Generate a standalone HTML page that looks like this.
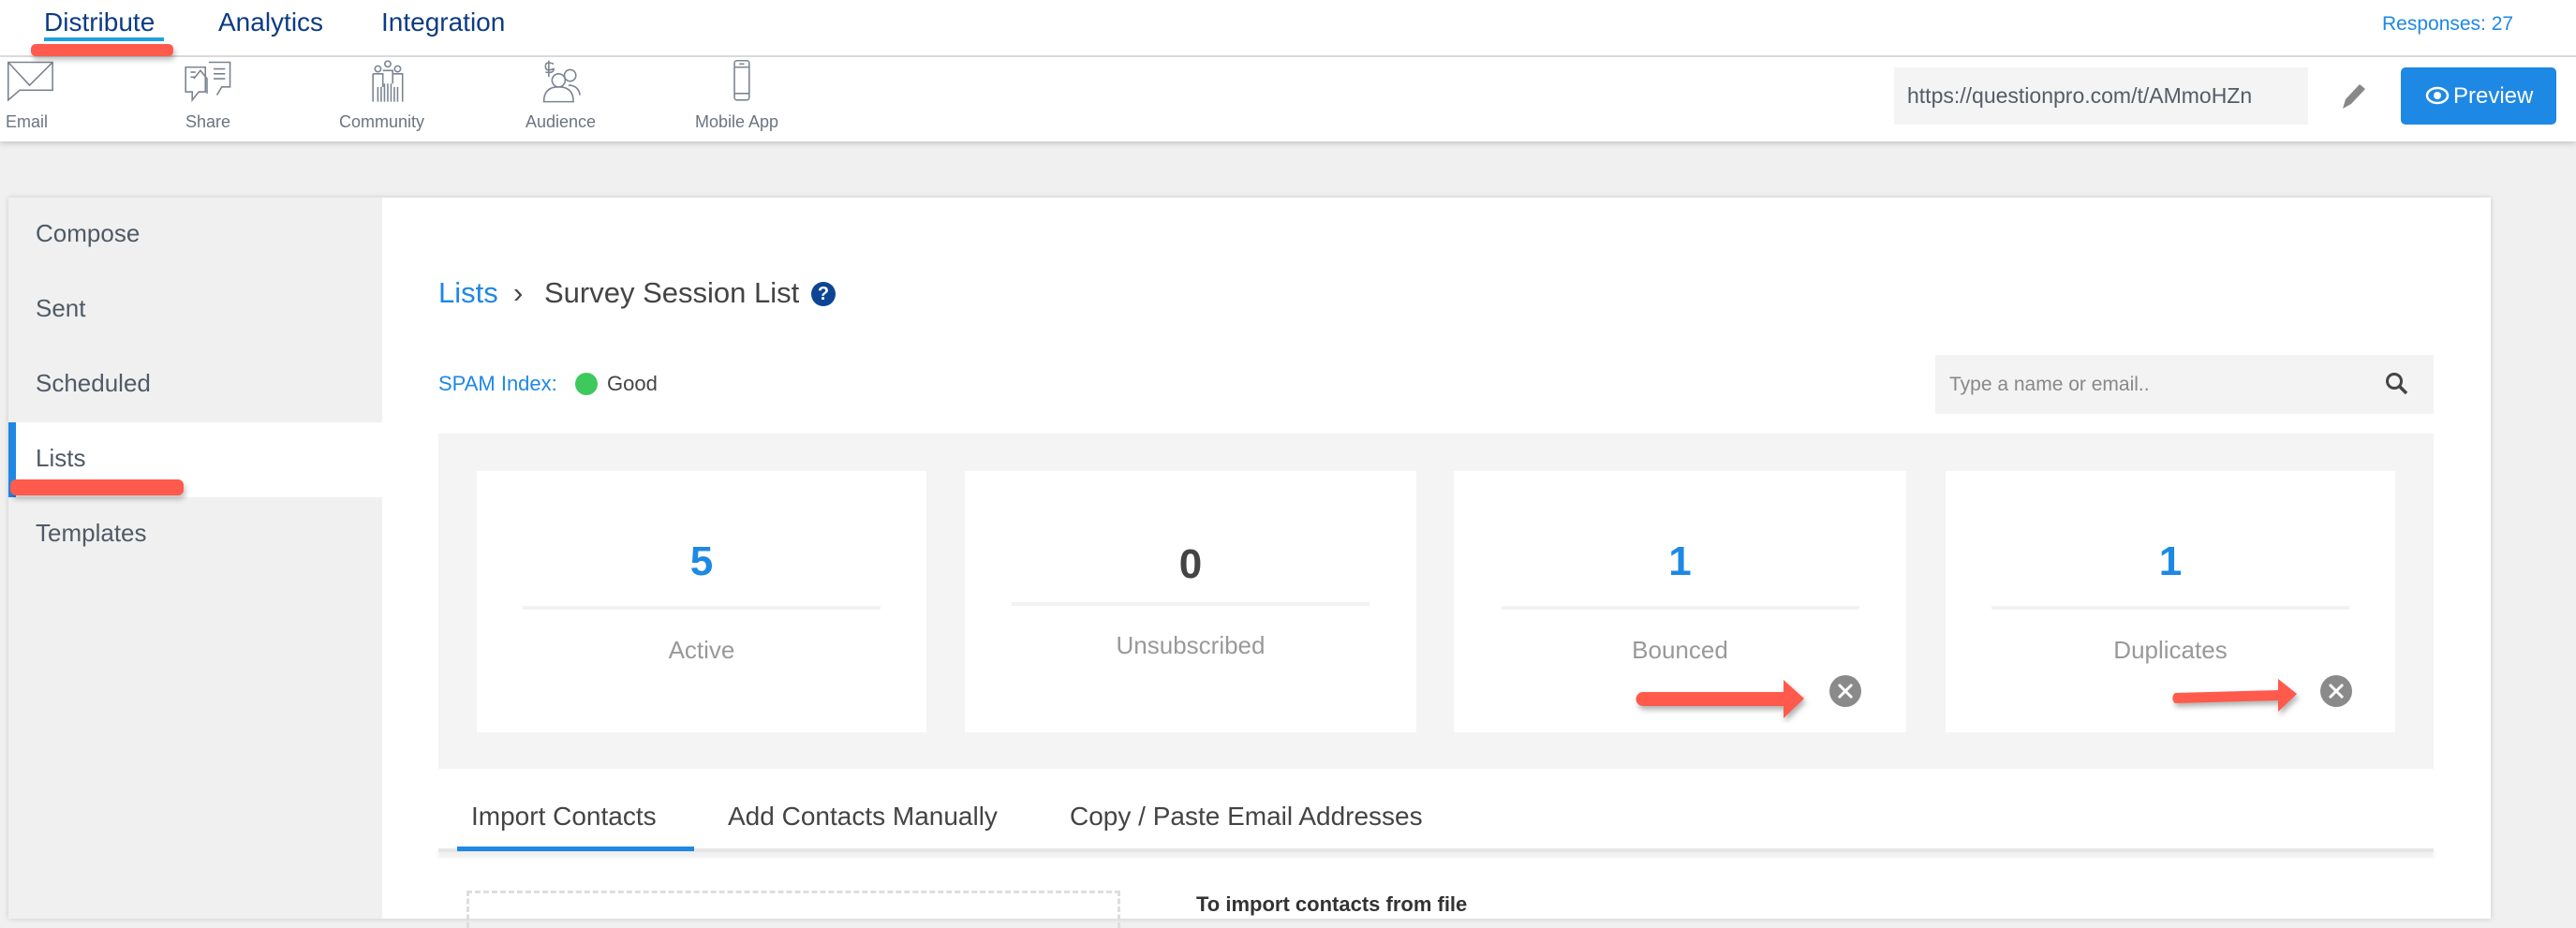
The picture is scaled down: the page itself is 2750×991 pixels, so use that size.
<!DOCTYPE html>
<html><head><meta charset="utf-8"><style>
*{margin:0;padding:0;box-sizing:border-box}
body{width:2750px;height:974px;overflow:hidden;background:#f0f0f0;font-family:"Liberation Sans",sans-serif;position:relative}
.a{position:absolute;white-space:nowrap}
</style></head><body>
<!-- top nav -->
<div class="a" style="left:0;top:0;width:2750px;height:60px;background:#fff"></div>
<div class="a" style="left:47px;top:8px;font-size:28px;color:#0d3c84">Distribute</div>
<div class="a" style="left:47px;top:40px;width:128px;height:4px;background:#1ea0e0"></div>
<div class="a" style="left:233px;top:8px;font-size:28px;color:#0d3c84">Analytics</div>
<div class="a" style="left:407px;top:8px;font-size:28px;color:#0d3c84">Integration</div>
<div class="a" style="left:2543px;top:14px;font-size:21px;color:#1e88e5">Responses: 27</div>
<div class="a" style="left:0;top:59px;width:2750px;height:2px;background:#dcdcdc"></div>
<!-- toolbar -->
<div class="a" style="left:0;top:61px;width:2750px;height:90px;background:#fff;box-shadow:0 3px 5px rgba(0,0,0,.15)"></div>
<svg class="a" style="left:0;top:63px" width="900" height="50">
<g transform="scale(1.754)" fill="none" stroke="#7b8491" stroke-width="0.9">
<path d="M5 2h27v17H12l-7 6z M5 2l13 14 14-14"/>
<path d="M113 5h12v15h-4l-4 5v-5h-4z M127 2h13v15h-5l-3 5 M118 12l4-5 4 5v9 M116 8h3 M116 11h3 M130 6h7 M130 9h7 M130 12h7"/>
<circle cx="236" cy="3" r="1.8"/><circle cx="230" cy="6" r="1.8"/><circle cx="242" cy="6" r="1.8"/>
<path d="M233 7h6v8 M227 9h6v8 M239 9h6v8 M227 9v17 M245 9v17 M230 17v9 M232 17v9 M234 15v11 M236 15v11 M238 15v11 M240 17v9 M242 17v9"/>
<path d="M334 1v10 M337 3q-5-2-5 1.5t5 1.5q0 3-5 2"/><circle cx="340" cy="13" r="4"/><circle cx="347" cy="10" r="3.5"/><path d="M331 26q0-9 9-9t9 9z M346 16q6 0 7 6"/>
<rect x="447" y="1" width="9" height="24" rx="1.5"/><path d="M447 5h9 M447 21h9 M450 3h3"/>
</g></svg>
<div class="a" style="left:6px;top:120px;font-size:18px;color:#6b7480">Email</div>
<div class="a" style="left:198px;top:120px;font-size:18px;color:#6b7480">Share</div>
<div class="a" style="left:362px;top:120px;font-size:18px;color:#6b7480">Community</div>
<div class="a" style="left:561px;top:120px;font-size:18px;color:#6b7480">Audience</div>
<div class="a" style="left:742px;top:120px;font-size:18px;color:#6b7480">Mobile App</div>
<div class="a" style="left:2022px;top:72px;width:442px;height:61px;background:#f4f4f4;font-size:23px;color:#555c66;line-height:61px;padding-left:14px;overflow:hidden">https://questionpro.com/t/AMmoHZn</div>
<svg class="a" style="left:2497px;top:86px" width="30" height="34"><path d="M4 30l3-10 15-16 6 5-15 16z" fill="#888"/></svg>
<div class="a" style="left:2563px;top:72px;width:166px;height:61px;background:#1e88e5;border-radius:5px;color:#fff;font-size:24px;line-height:61px;padding-left:56px">Preview</div>
<svg class="a" style="left:2589px;top:92px" width="26" height="20"><ellipse cx="13" cy="10" rx="11" ry="8" fill="none" stroke="#fff" stroke-width="2.5"/><circle cx="13" cy="10" r="4" fill="#fff"/></svg>
<!-- main card -->
<div class="a" style="left:9px;top:211px;width:2650px;height:770px;background:#fff;box-shadow:0 0 6px rgba(0,0,0,.15)"></div>
<div class="a" style="left:9px;top:211px;width:399px;height:770px;background:#f0f0f0"></div>
<div class="a" style="left:9px;top:451px;width:399px;height:80px;background:#fff"></div>
<div class="a" style="left:9px;top:451px;width:8px;height:80px;background:#1e88e5"></div>
<div class="a" style="left:38px;top:234px;font-size:26px;color:#505a66">Compose</div>
<div class="a" style="left:38px;top:314px;font-size:26px;color:#505a66">Sent</div>
<div class="a" style="left:38px;top:394px;font-size:26px;color:#505a66">Scheduled</div>
<div class="a" style="left:38px;top:474px;font-size:26px;color:#505a66">Lists</div>
<div class="a" style="left:38px;top:554px;font-size:26px;color:#505a66">Templates</div>
<div class="a" style="left:11px;top:512px;width:185px;height:17px;background:#ff5a4c;border-radius:6px;box-shadow:2px 4px 6px rgba(0,0,0,.25)"></div>
<div class="a" style="left:33px;top:47px;width:152px;height:13px;background:#ff5a4c;border-radius:5px;box-shadow:2px 4px 6px rgba(0,0,0,.25)"></div>
<!-- breadcrumb -->
<div class="a" style="left:468px;top:295px;font-size:31px;color:#1e88e5">Lists</div>
<div class="a" style="left:548px;top:295px;font-size:31px;color:#444">›</div>
<div class="a" style="left:581px;top:295px;font-size:31px;color:#444">Survey Session List</div>
<div class="a" style="left:866px;top:301px;width:26px;height:26px;border-radius:50%;background:#0d4494;color:#fff;font-size:20px;font-weight:bold;text-align:center;line-height:26px">?</div>
<div class="a" style="left:468px;top:397px;font-size:22px;color:#1e88e5">SPAM Index:</div>
<div class="a" style="left:614px;top:398px;width:24px;height:24px;border-radius:50%;background:#3ec95c"></div>
<div class="a" style="left:648px;top:397px;font-size:22px;color:#444">Good</div>
<div class="a" style="left:2066px;top:379px;width:532px;height:63px;background:#f3f3f3;font-size:21px;color:#888;line-height:63px;padding-left:15px">Type a name or email..</div>
<svg class="a" style="left:2545px;top:396px" width="28" height="28"><circle cx="11" cy="11" r="7.5" fill="none" stroke="#444" stroke-width="3"/><path d="M16 16l8 8" stroke="#444" stroke-width="3.5"/></svg>
<!-- stats -->
<div class="a" style="left:468px;top:463px;width:2130px;height:358px;background:#f4f4f4"></div>
<div class="a" style="left:509px;top:503px;width:480px;height:279px;background:#fff"></div>
<div class="a" style="left:1030px;top:503px;width:482px;height:279px;background:#fff"></div>
<div class="a" style="left:1552px;top:503px;width:483px;height:279px;background:#fff"></div>
<div class="a" style="left:2077px;top:503px;width:480px;height:279px;background:#fff"></div>
<div class="a" style="left:558px;top:647px;width:382px;height:4px;background:#f2f2f2"></div>
<div class="a" style="left:1080px;top:643px;width:382px;height:4px;background:#f2f2f2"></div>
<div class="a" style="left:1603px;top:647px;width:382px;height:4px;background:#f2f2f2"></div>
<div class="a" style="left:2126px;top:647px;width:382px;height:4px;background:#f2f2f2"></div>
<div class="a" style="left:509px;top:575px;width:480px;text-align:center;font-size:44px;font-weight:bold;color:#1e88e5">5</div>
<div class="a" style="left:1030px;top:578px;width:482px;text-align:center;font-size:44px;font-weight:bold;color:#444">0</div>
<div class="a" style="left:1552px;top:575px;width:483px;text-align:center;font-size:44px;font-weight:bold;color:#1e88e5">1</div>
<div class="a" style="left:2077px;top:575px;width:480px;text-align:center;font-size:44px;font-weight:bold;color:#1e88e5">1</div>
<div class="a" style="left:509px;top:679px;width:480px;text-align:center;font-size:26px;color:#999">Active</div>
<div class="a" style="left:1030px;top:674px;width:482px;text-align:center;font-size:26px;color:#999">Unsubscribed</div>
<div class="a" style="left:1552px;top:679px;width:483px;text-align:center;font-size:26px;color:#999">Bounced</div>
<div class="a" style="left:2077px;top:679px;width:480px;text-align:center;font-size:26px;color:#999">Duplicates</div>
<svg class="a" style="left:1740px;top:712px" width="850" height="60">
<g fill="#8a8a8a"><circle cx="230" cy="26" r="17"/><circle cx="754" cy="26" r="17"/></g>
<g stroke="#fff" stroke-width="3"><path d="M223 19l14 14M237 19l-14 14M747 19l14 14M761 19l-14 14"/></g>
<g fill="#ff5a4c" style="filter:drop-shadow(2px 4px 3px rgba(0,0,0,.3))"><path d="M14 27h150v-13l22 20-22 21v-13H14a7 7 0 0 1 0-15z"/><path d="M582 28l110-3v-12l20 16-20 19v-12l-110 3a7 7 0 0 1 0-11z"/></g>
</svg>
<!-- tabs -->
<div class="a" style="left:468px;top:906px;width:2130px;height:4px;background:#e6e6e6;box-shadow:0 4px 6px rgba(0,0,0,.12)"></div>
<div class="a" style="left:488px;top:904px;width:253px;height:5px;background:#1e88e5"></div>
<div class="a" style="left:503px;top:856px;font-size:28px;color:#444">Import Contacts</div>
<div class="a" style="left:777px;top:856px;font-size:28px;color:#444">Add Contacts Manually</div>
<div class="a" style="left:1142px;top:856px;font-size:28px;color:#444">Copy / Paste Email Addresses</div>
<div class="a" style="left:498px;top:951px;width:698px;height:40px;border:3px dashed #ddd;border-bottom:none"></div>
<div class="a" style="left:1277px;top:953px;font-size:22px;font-weight:bold;color:#333">To import contacts from file</div>
</body></html>
